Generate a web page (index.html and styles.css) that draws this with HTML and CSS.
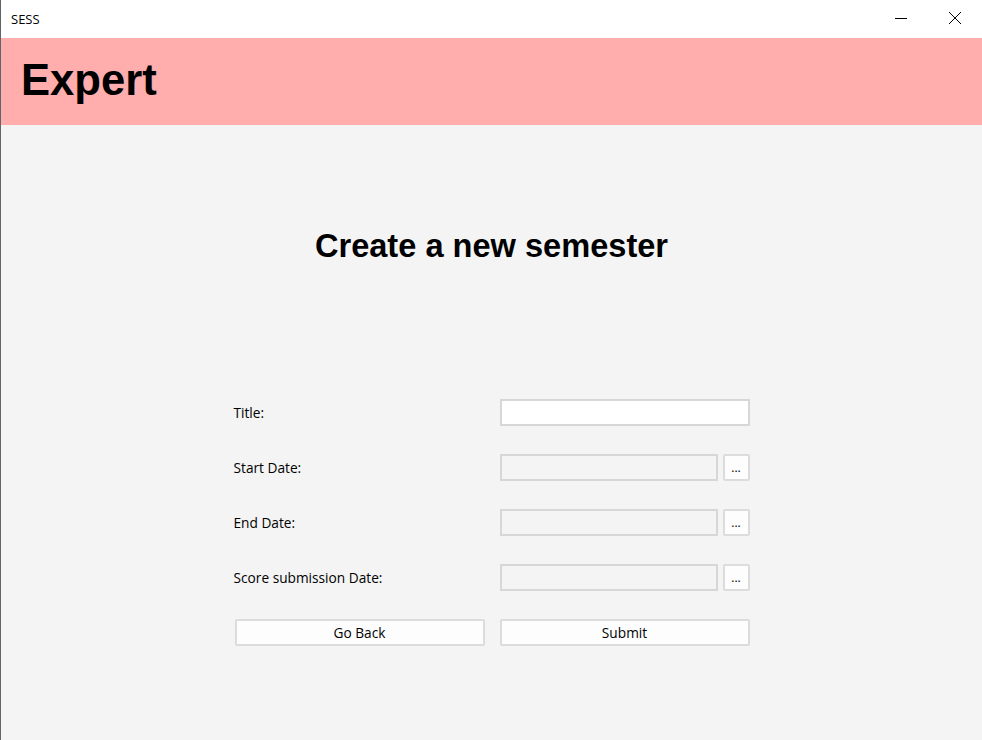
FILE: index.html
```html
<!DOCTYPE html>
<html>
<head>
<meta charset="utf-8">
<link rel="stylesheet" href="styles.css">
</head>
<body>
<div class="window">
  <div class="titlebar">
    <span class="app-name">SESS</span>
    <div class="controls">
      <span class="ctl">
        <svg width="14" height="14" viewBox="0 0 14 14"><path d="M1 7.5H13" stroke="#000" stroke-width="1"/></svg>
      </span>
      <span class="ctl">
        <svg width="14" height="14" viewBox="0 0 14 14"><path d="M1 1L13 13M13 1L1 13" stroke="#000" stroke-width="1"/></svg>
      </span>
    </div>
  </div>
  <header class="banner">Expert</header>
  <main class="content">
    <h1 class="heading">Create a new semester</h1>
    <div class="form">
      <label class="label">Title:</label>
      <div class="field"><input class="input input-white" type="text"></div>

      <label class="label">Start Date:</label>
      <div class="field date"><input class="input input-disabled" type="text" disabled><button class="pick">...</button></div>

      <label class="label">End Date:</label>
      <div class="field date"><input class="input input-disabled" type="text" disabled><button class="pick">...</button></div>

      <label class="label">Score submission Date:</label>
      <div class="field date"><input class="input input-disabled" type="text" disabled><button class="pick">...</button></div>

      <button class="btn">Go Back</button>
      <button class="btn">Submit</button>
    </div>
  </main>
</div>
</body>
</html>
```

FILE: styles.css
```css
html, body {
  margin: 0;
  padding: 0;
}
body {
  width: 982px;
  height: 740px;
  overflow: hidden;
  font-family: "Open Sans", "Noto Sans", sans-serif;
}
.window {
  height: 740px;
  border-left: 1px solid #5d6568;
  box-sizing: border-box;
  display: flex;
  flex-direction: column;
  background: #f4f4f4;
}
.titlebar {
  height: 38px;
  background: #ffffff;
  display: flex;
  align-items: center;
  justify-content: space-between;
  padding-left: 10px;
  flex-shrink: 0;
}
.app-name {
  font-size: 13px;
  color: #000;
  margin-top: -1px;
}
.controls {
  display: flex;
  height: 100%;
}
.ctl {
  width: 46px;
  display: flex;
  align-items: center;
  justify-content: center;
  margin-top: -2px;
}
.ctl:first-child { margin-right: 8px; }
.ctl:last-child { margin-right: 4px; }
.banner {
  height: 87px;
  background: #ffadad;
  font-family: "Liberation Sans", Arial, sans-serif;
  font-weight: bold;
  font-size: 43.6px;
  line-height: 84px;
  padding-left: 20px;
  color: #000;
  flex-shrink: 0;
}
.content {
  flex: 1;
  display: flex;
  flex-direction: column;
  align-items: center;
}
.heading {
  margin: 103px 0 0 0;
  font-family: "Liberation Sans", Arial, sans-serif;
  font-weight: bold;
  font-size: 32.6px;
  line-height: 36px;
  color: #000;
}
.form {
  margin-top: 135px;
  margin-left: 1px;
  display: grid;
  grid-template-columns: 250px 250px;
  column-gap: 15px;
  row-gap: 28px;
  grid-auto-rows: 27px;
}
.label {
  font-size: 13.7px;
  color: #000;
  display: flex;
  align-items: center;
  margin-left: -1px;
}
.field {
  display: flex;
  gap: 5px;
}
.input {
  flex: 1;
  min-width: 0;
  height: 27px;
  box-sizing: border-box;
  border: 2px solid #d7d7d7;
  margin: 0;
  padding: 0 4px;
  outline: none;
}
.input-white { background: #ffffff; }
.input-disabled { background: #f4f4f4; }
.pick {
  width: 27px;
  height: 27px;
  box-sizing: border-box;
  border: 2px solid #dcdcdc;
  border-radius: 2px;
  background: #fdfdfd;
  margin: 0;
  padding: 0;
  font-family: "Open Sans", sans-serif;
  font-size: 12px;
  color: #000;
  line-height: 20px;
}
.btn {
  height: 27px;
  box-sizing: border-box;
  border: 2px solid #dcdcdc;
  border-radius: 2px;
  background: #fdfdfd;
  margin: 0;
  padding: 0;
  font-family: "Open Sans", "Noto Sans", sans-serif;
  font-size: 13.7px;
  color: #000;
}
```
